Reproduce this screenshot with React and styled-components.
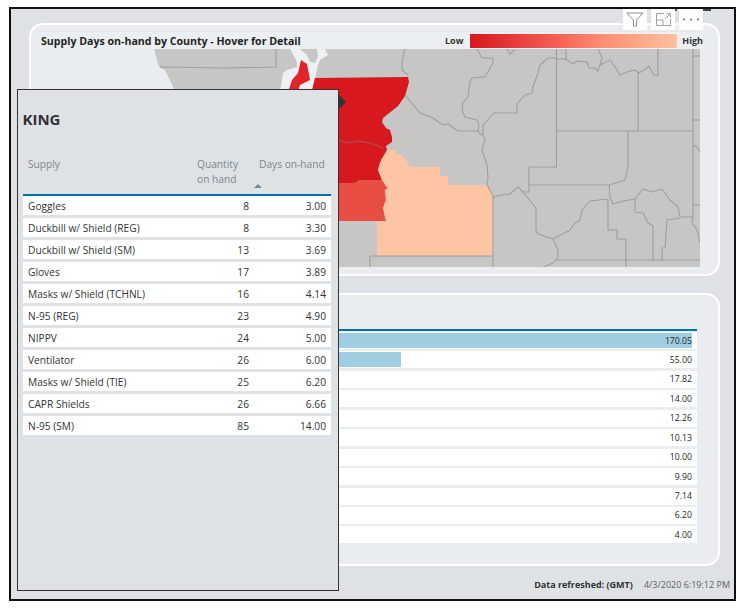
import React from "react";
import styled, { createGlobalStyle } from "styled-components";

const FONT = `"Open Sans", "Noto Sans", sans-serif`;

const GlobalStyle = createGlobalStyle`
  html, body { margin: 0; padding: 0; background: #fff; }
  body { font-family: ${FONT}; }
`;

const Page = styled.div`
  padding: 7px 0 0 9px;
`;

const Frame = styled.div`
  position: relative;
  box-sizing: border-box;
  width: 727px;
  height: 594px;
  border: 2px solid #111;
  background: #dfe2e5;
  padding: 14px 0 0 18px;
`;

const Panel = styled.section`
  box-sizing: border-box;
  width: 691px;
  height: ${(p) => p.$height}px;
  margin-bottom: 17px;
  border: 2px solid #fff;
  border-radius: 14px;
  background: #e9edf0;
  padding: ${(p) => p.$top}px 0 0 7px;
`;

const MapHeader = styled.div`
  display: flex;
  align-items: center;
  height: 18px;
  width: 665px;
  padding-left: 3px;
  box-sizing: border-box;
  border-top: 1px solid #e3e7ea;
  background: #ebeff2;
`;

const MapTitle = styled.div`
  flex: 1;
  font-size: 10.6px;
  font-weight: 700;
  color: #252423;
  white-space: nowrap;
`;

const LegendLabel = styled.span`
  font-size: 9px;
  font-weight: 700;
  color: #333;
`;

const LegendBar = styled.div`
  box-sizing: border-box;
  width: 209px;
  height: 16px;
  margin: 0 4px 0 6px;
  border: 1px solid #f3f3f3;
  background: linear-gradient(90deg, #d9161f, #f6665a 45%, #ff8f73 65%, #ffc0a0);
`;

const MapSvg = styled.svg`
  display: block;
  width: 662px;
  height: 218px;
`;

const Toolbar = styled.div`
  position: absolute;
  top: 0;
  right: 31px;
  display: flex;
  gap: 4px;
  &::before {
    content: "";
    position: absolute;
    left: 52px;
    top: 0;
    width: 2px;
    height: 2px;
    background: #3b5a7a;
  }
  &::after {
    content: "";
    position: absolute;
    right: -8px;
    top: 0;
    width: 8px;
    height: 2px;
    background: #3b4a5a;
  }
`;

const ToolButton = styled.div`
  display: flex;
  align-items: center;
  justify-content: center;
  width: 24px;
  height: 21px;
  background: #fff;
`;

const Footer = styled.div`
  position: absolute;
  right: 4px;
  bottom: 8px;
  display: flex;
  gap: 11px;
  font-size: 9px;
  color: #605e5c;
`;

const FooterLabel = styled.span`
  font-weight: 700;
  color: #333;
`;

const DetailTable = styled.div`
  width: 659px;
  border-top: 2px solid #0070a8;
  padding-top: 1px;
  display: grid;
  row-gap: 2.45px;
`;

const DetailRow = styled.div`
  height: 17px;
  background: #fff;
  padding: 1px 5px 1px 224px;
  box-sizing: border-box;
`;

const BarCell = styled.div`
  position: relative;
  height: 100%;
  display: flex;
  align-items: center;
  justify-content: flex-end;
`;

const BarFill = styled.div`
  position: absolute;
  left: 0;
  top: 0;
  bottom: 0;
  background: #9fcee3;
`;

const BarValue = styled.span`
  position: relative;
  font-size: 8.7px;
  color: #252423;
`;

const Popup = styled.aside`
  position: absolute;
  left: 6px;
  top: 80px;
  box-sizing: border-box;
  width: 322px;
  height: 502px;
  border: 1px solid #333;
  background: #dfe2e5;
  padding: 19px 7px 0 4.5px;
  &::after {
    content: "";
    position: absolute;
    top: 5px;
    right: -8px;
    border-style: solid;
    border-width: 7px 0 7px 7px;
    border-color: transparent transparent transparent #333;
  }
`;

const PopupTitle = styled.h2`
  margin: 0;
  font-size: 15px;
  line-height: 20px;
  font-weight: 700;
  color: #333;
`;

const SupplyGrid = styled.div`
  display: grid;
  grid-template-columns: 1fr 58px 78px;
  margin-left: 0.5px;
`;

const HeadCell = styled.div`
  position: relative;
  height: 37px;
  margin-top: 28px;
  padding-left: ${(p) => p.$left}px;
  font-size: 10.2px;
  line-height: 15px;
  color: #7c878e;
  border-bottom: 2px solid #0070a8;
  white-space: nowrap;
`;

const SortArrow = styled.span`
  position: absolute;
  left: 1px;
  top: 27px;
  border-style: solid;
  border-width: 0 4px 4px 4px;
  border-color: transparent transparent #6f8c9c transparent;
`;

const SupplyRow = styled.div`
  display: grid;
  grid-template-columns: subgrid;
  grid-column: 1 / -1;
  align-items: center;
  height: 19px;
  margin-bottom: 3px;
  background: #fff;
  font-size: 10.2px;
  color: #333;
`;

const SupplyName = styled.span`
  padding-left: 5px;
  white-space: nowrap;
`;

const SupplyNum = styled.span`
  text-align: right;
  padding-right: ${(p) => p.$pad}px;
`;

const supplies = [
  ["Goggles", 8, "3.00"],
  ["Duckbill w/ Shield (REG)", 8, "3.30"],
  ["Duckbill w/ Shield (SM)", 13, "3.69"],
  ["Gloves", 17, "3.89"],
  ["Masks w/ Shield (TCHNL)", 16, "4.14"],
  ["N-95 (REG)", 23, "4.90"],
  ["NIPPV", 24, "5.00"],
  ["Ventilator", 26, "6.00"],
  ["Masks w/ Shield (TIE)", 25, "6.20"],
  ["CAPR Shields", 26, "6.66"],
  ["N-95 (SM)", 85, "14.00"],
];

const detailValues = [170.05, 55, 17.82, 14, 12.26, 10.13, 10, 9.9, 7.14, 6.2, 4];
const BAR_SCALE = 170.05;

const countyLines = [
  "M276,49 L276,67 L227,68 L160,67",
  "M405,49 L402,62 L402,70 L408,75",
  "M405,95 L420,113 L433,118 L443,125 L448,124 L458,131 L478,131 L480,134 L483,135",
  "M477,49 L482,58 L493,58 L493,63 L490,68 L485,77 L472,78 L470,82 L469,88 L468,97 L463,103 L462,110 L465,117 L477,120 L479,125 L478,131",
  "M483,135 L483,125 L494,113 L517,113 L517,104 L525,95 L532,93 L533,87 L538,73 L540,65 L548,58 L557,58",
  "M483,135 L485,140 L482,150 L487,165 L488,177 L487,185 L493,196",
  "M556.5,49 L556.5,167 L529,167 L529,192",
  "M556,131 L693,131",
  "M628,131 L628,167 L625,180 L609,185 L529,185",
  "M493,197 L502,195 L510,194 L518,187 L523,192 L529,192",
  "M523,192 L536,208 L536,230 L538,234 L553,239 L558,250 L558,257 L553,263 L543,267",
  "M553,239 L570,230 L575,223 L580,220 L582,210 L590,201 L608,199",
  "M609,185 L610,197 L613,204 L623,201 L635,199 L643,189 L652,192 L662,189 L670,200 L678,207 L680,217 L693,217",
  "M608,200 L608,230 L617,230 L617,239 L626,239 L626,267",
  "M635,199 L635,212 L643,213 L648,223 L653,226 L653,260",
  "M680,218 L667,220 L665,248 L662,248 L662,260",
  "M693,49 L693,217 L692,223 L697,230 L700,243",
  "M693,205 L700,205",
  "M693,56 L700,56",
  "M693,120 L700,120",
  "M693,145 L697,147 L700,152",
  "M556,260 L700,260",
  "M493,196 L493,267",
  "M370,256 L370,267",
  "M370,256 L493,256",
  "M557,59 L565,59 L567,60 L573,64 L577,61 L587,62 L589,68 L595,68 L598,71 L600,65 L610,60 L615,67 L620,75 L627,72 L635,70 L639,73 L647,68 L649,66 L653,74 L658,76 L658,49",
  "M566,49 L566,59",
  "M598,49 L602,58 L600,65",
  "M638,73 L638,131",
  "M507,49 L510,54 L515,49",
];

function CountyMap() {
  return (
    <MapSvg viewBox="38 49 662 218">
      <path d="M154,49 L159,67 L165,70 L174,89 L174,267 L700,267 L700,49 Z" fill="#c8c6c4" />
      <path
        d="M290,49 L297,62 L297,67 L287,70 L283,73 L280,92 L312,92 L315,78 L318,65 L320,60 L328,55 L325,49 Z"
        fill="#eef1f4"
      />
      <path d="M300,49 L317,49 L318,57 L315,63 L310,62 L307,55 Z" fill="#c8c6c4" />
      <path d="M301,60 L307,64 L310,80 L300,85 L298,92 L288,92 L292,80 L298,73 Z" fill="#e0242a" />
      <path
        d="M315,78 L408,77 L409,82 L405,96 L398,106 L383,118 L382,122 L386,128 L390,130 L392,137 L392,142 L386,146 L387,150 L381,160 L378,170 L382,180 L360,180 L355,183 L300,183 L300,92 L312,90 Z"
        fill="#d7181f"
      />
      <path
        d="M300,183 L355,183 L360,180 L382,180 L386,186 L388,188 L385,190 L386,200 L383,208 L386,221 L300,221 Z"
        fill="#e94e45"
      />
      <path
        d="M393,150 L405,158 L410,167 L440,167 L440,176 L448,176 L448,185 L487,185 L493,196 L493,256 L377,256 L377,221 L386,221 L383,208 L386,200 L385,190 L388,188 L386,186 L382,180 L378,170 L380,163 L385,155 L387,150 Z"
        fill="#fdc5a3"
      />
      <g fill="none" stroke="#a09e9c" strokeWidth="1.1" strokeLinejoin="round">
        {countyLines.map((d) => (
          <path key={d} d={d} />
        ))}
      </g>
      <path
        d="M339,140 L348,143 L358,141 L370,143 L383,148"
        fill="none"
        stroke="#a8595c"
        strokeWidth="1"
      />
    </MapSvg>
  );
}

function FilterIcon() {
  return (
    <svg width="18" height="15" viewBox="0 0 18 15">
      <path d="M0.7,1 L17,1 L10.5,8 L10.5,14 L7.5,14 L7.5,8 Z" fill="none" stroke="#8a8f94" strokeWidth="1" />
    </svg>
  );
}

function ExpandIcon() {
  return (
    <svg width="15" height="13" viewBox="0 0 15 13">
      <path
        d="M8,0.5 L0.5,0.5 L0.5,12.5 L14.5,12.5 L14.5,6 M0.5,7 L7,7 L7,12.5 M9,6 L14,1 M10.5,0.7 L14.5,0.7 L14.5,4"
        fill="none"
        stroke="#9aa0a5"
        strokeWidth="1"
      />
    </svg>
  );
}

function MoreIcon() {
  return (
    <svg width="18" height="3" viewBox="0 0 18 3">
      <circle cx="2" cy="1.5" r="1" fill="#666" />
      <circle cx="9" cy="1.5" r="1" fill="#666" />
      <circle cx="16" cy="1.5" r="1" fill="#666" />
    </svg>
  );
}

export default function App() {
  return (
    <Page>
      <GlobalStyle />
      <Frame>
        <Panel $height={253} $top={6}>
          <MapHeader>
            <MapTitle>Supply Days on-hand by County - Hover for Detail</MapTitle>
            <LegendLabel>Low</LegendLabel>
            <LegendBar />
            <LegendLabel>High</LegendLabel>
          </MapHeader>
          <CountyMap />
        </Panel>
        <Panel $height={273} $top={34}>
          <DetailTable>
            {detailValues.map((v) => (
              <DetailRow key={v}>
                <BarCell>
                  {v > 50 && <BarFill style={{ width: `${(v / BAR_SCALE) * 100}%` }} />}
                  <BarValue>{v.toFixed(2)}</BarValue>
                </BarCell>
              </DetailRow>
            ))}
          </DetailTable>
        </Panel>
        <Toolbar>
          <ToolButton><FilterIcon /></ToolButton>
          <ToolButton><ExpandIcon /></ToolButton>
          <ToolButton><MoreIcon /></ToolButton>
        </Toolbar>
        <Footer>
          <FooterLabel>Data refreshed: (GMT)</FooterLabel>
          <span>4/3/2020 6:19:12 PM</span>
        </Footer>
        <Popup>
          <PopupTitle>KING</PopupTitle>
          <SupplyGrid>
            <HeadCell $left={5}>Supply</HeadCell>
            <HeadCell $left={2}>Quantity<br />on hand</HeadCell>
            <HeadCell $left={6}>
              Days on-hand
              <SortArrow />
            </HeadCell>
            {supplies.map(([name, qty, days]) => (
              <SupplyRow key={name}>
                <SupplyName>{name}</SupplyName>
                <SupplyNum $pad={4}>{qty}</SupplyNum>
                <SupplyNum $pad={5}>{days}</SupplyNum>
              </SupplyRow>
            ))}
          </SupplyGrid>
        </Popup>
      </Frame>
    </Page>
  );
}
